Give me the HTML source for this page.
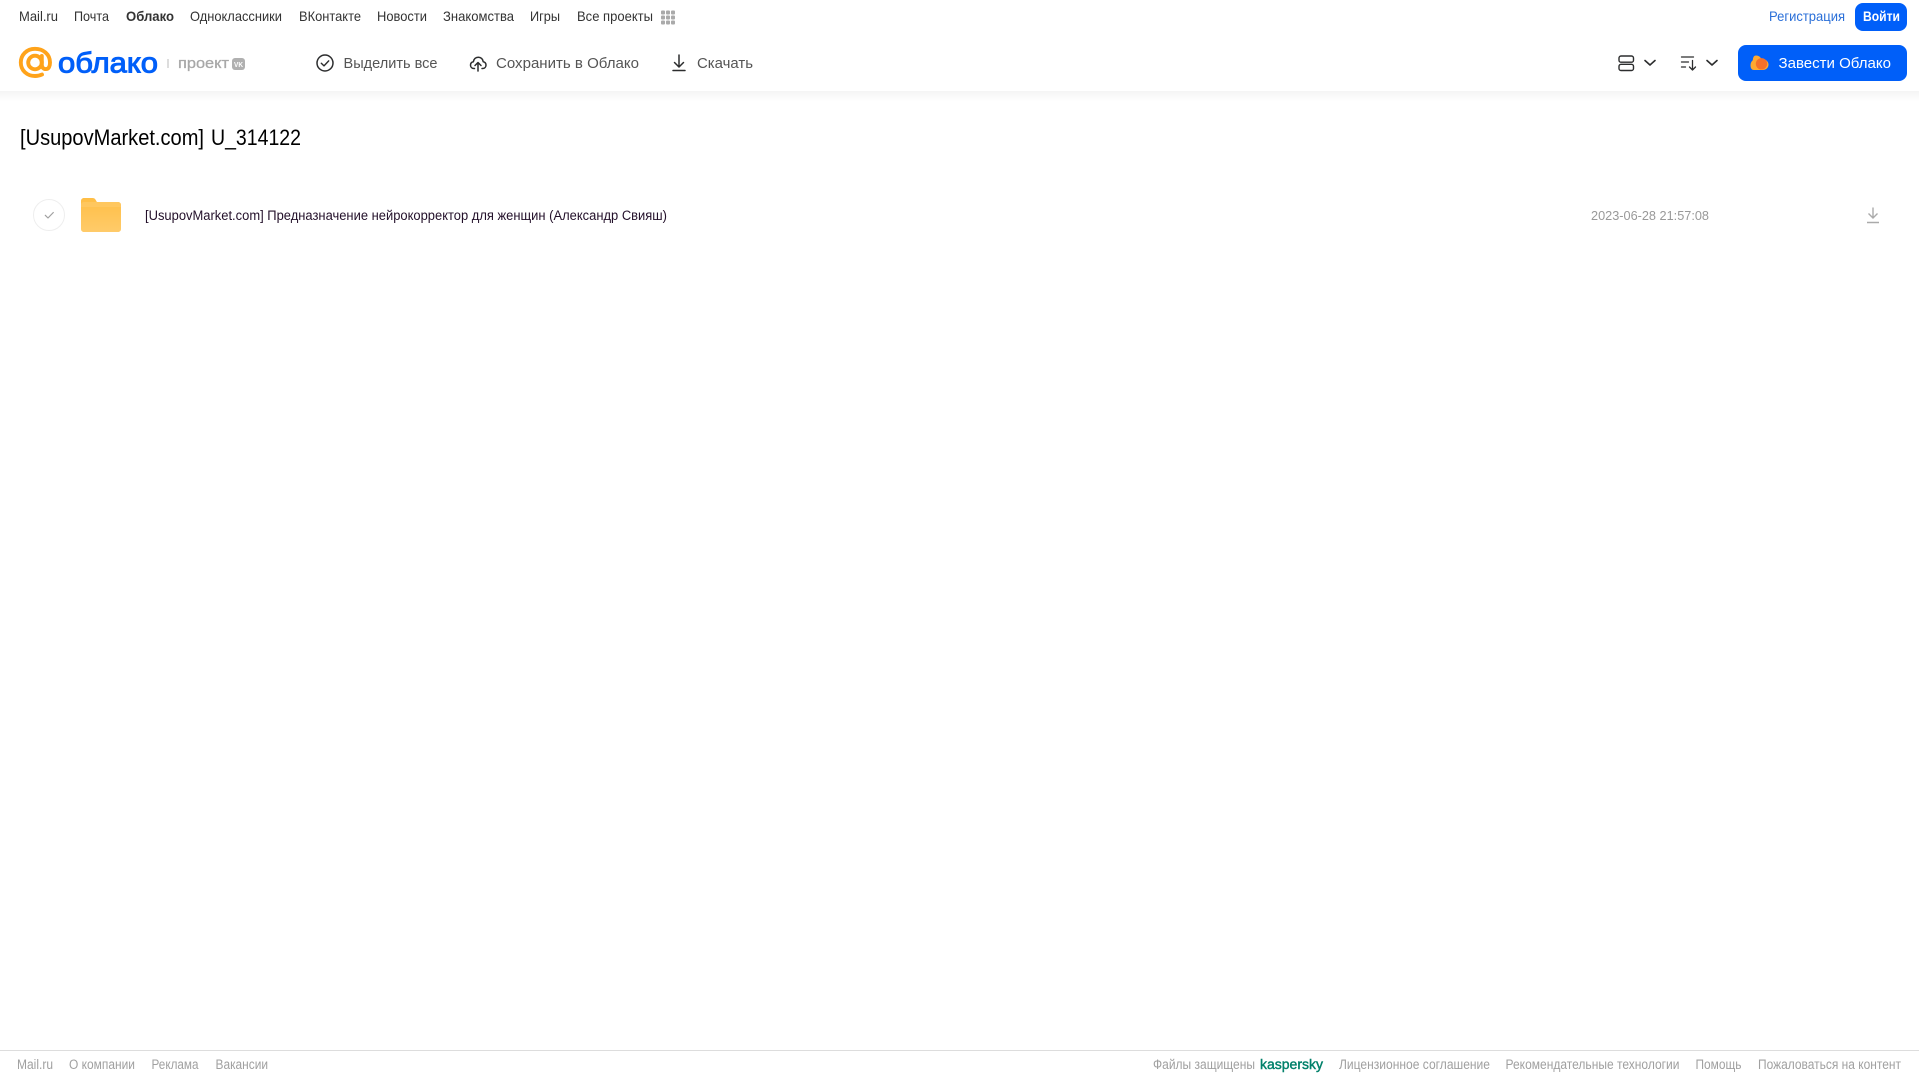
<!DOCTYPE html>
<html lang="ru"><head><meta charset="utf-8"><title>Облако</title>
<style>
html,body{margin:0;padding:0;background:#fff;width:1919px;height:1079px;overflow:hidden}
svg{display:block;position:absolute;left:0;top:0}
text{font-family:"Liberation Sans",sans-serif}
.n{font-size:14px;fill:#333}
.a{font-size:15px;fill:#555}
.f{font-size:13.5px;fill:#a0a0a0}
</style></head><body>
<svg width="1919" height="1079" viewBox="0 0 1919 1079" xmlns="http://www.w3.org/2000/svg">
<defs>
<linearGradient id="sh" x1="0" y1="0" x2="0" y2="1"><stop offset="0" stop-color="#f4f4f4"/><stop offset="1" stop-color="#fff"/></linearGradient>
<linearGradient id="fo" x1="0" y1="0" x2="0" y2="1"><stop offset="0" stop-color="#ffbe45"/><stop offset="1" stop-color="#ffcb6a"/></linearGradient>
</defs>
<rect x="0" y="91" width="1919" height="11" fill="url(#sh)"/>

<!-- top nav -->
<text class="n" x="19" y="21" textLength="39" lengthAdjust="spacingAndGlyphs">Mail.ru</text>
<text class="n" x="74" y="21" textLength="35" lengthAdjust="spacingAndGlyphs">Почта</text>
<text class="n" x="126" y="21" textLength="48" lengthAdjust="spacingAndGlyphs" font-weight="bold">Облако</text>
<text class="n" x="190" y="21" textLength="92" lengthAdjust="spacingAndGlyphs">Одноклассники</text>
<text class="n" x="299" y="21" textLength="62" lengthAdjust="spacingAndGlyphs">ВКонтакте</text>
<text class="n" x="377" y="21" textLength="50" lengthAdjust="spacingAndGlyphs">Новости</text>
<text class="n" x="443" y="21" textLength="71" lengthAdjust="spacingAndGlyphs">Знакомства</text>
<text class="n" x="530" y="21" textLength="30" lengthAdjust="spacingAndGlyphs">Игры</text>
<text class="n" x="577" y="21" textLength="76" lengthAdjust="spacingAndGlyphs">Все проекты</text>
<g fill="#aaa">
<rect x="661" y="10.500" width="4" height="4" rx="1"/><rect x="666" y="10.500" width="4" height="4" rx="1"/><rect x="671" y="10.500" width="4" height="4" rx="1"/>
<rect x="661" y="15.500" width="4" height="4" rx="1"/><rect x="666" y="15.500" width="4" height="4" rx="1"/><rect x="671" y="15.500" width="4" height="4" rx="1"/>
<rect x="661" y="20.500" width="4" height="4" rx="1"/><rect x="666" y="20.500" width="4" height="4" rx="1"/><rect x="671" y="20.500" width="4" height="4" rx="1"/>
</g>
<text x="1769" y="21" font-size="14" fill="#2a6fd8" textLength="76" lengthAdjust="spacingAndGlyphs">Регистрация</text>
<rect x="1855" y="3" width="52" height="28" rx="8" fill="#005ff9"/>
<text x="1863" y="21" font-size="14" font-weight="bold" fill="#fff" textLength="37" lengthAdjust="spacingAndGlyphs">Войти</text>

<!-- logo -->
<g fill="none" stroke="#ffa31a" stroke-width="3.900" stroke-linecap="round">
<circle cx="35" cy="62.500" r="6.800"/>
<path d="M41.800 56v8.500c0 3 1.700 4.600 4 4.600 3 0 4.200-3 4.200-6.600C50 54 43 48.800 35 48.800 26.500 48.800 20.800 55 20.800 62.500 20.800 70.500 27 76 35 76c2.600 0 4.800-.5 7-1.500"/>
</g>
<text x="58" y="72.500" font-size="29" fill="#005ff9" stroke="#005ff9" stroke-width="1" textLength="100" lengthAdjust="spacingAndGlyphs">облако</text>
<rect x="167.500" y="59" width="1" height="9" fill="#bbb"/>
<text x="178" y="68" font-size="15" fill="#a8a8a8" stroke="#a8a8a8" stroke-width=".3" textLength="51" lengthAdjust="spacingAndGlyphs">проект</text>
<rect x="232" y="58" width="13" height="12" rx="3" fill="#b0b0b0"/>
<text x="234" y="67" font-size="7.500" font-weight="bold" fill="#fff" textLength="9" lengthAdjust="spacingAndGlyphs">VK</text>

<!-- actions -->
<circle cx="325" cy="63" r="8" fill="none" stroke="#2c2d2e" stroke-width="1.500"/>
<path d="M321.300 63.200l2.700 2.700 4.700-5" fill="none" stroke="#2c2d2e" stroke-width="1.400" stroke-linecap="round" stroke-linejoin="round"/>
<text class="a" x="343.500" y="68" textLength="94" lengthAdjust="spacingAndGlyphs">Выделить все</text>
<path d="M474.500 68.500h-.5c-2.200 0-3.500-1.600-3.500-3.400 0-1.700 1.100-3.100 2.900-3.400.3-2.700 2.300-4.500 4.900-4.500 2.600 0 4.600 1.800 4.900 4.500 1.800.3 2.800 1.700 2.800 3.400 0 1.800-1.300 3.400-3.500 3.400H482" fill="none" stroke="#2c2d2e" stroke-width="1.500" stroke-linecap="round" stroke-linejoin="round"/>
<path d="M478 71v-8M475 65.500l3-3 3 3" fill="none" stroke="#2c2d2e" stroke-width="1.500" stroke-linecap="round" stroke-linejoin="round"/>
<text class="a" x="496" y="68" textLength="143" lengthAdjust="spacingAndGlyphs">Сохранить в Облако</text>
<path d="M679 55v11.500M674.500 62.500l4.500 4.500 4.500-4.500M673 70.500h12" fill="none" stroke="#2c2d2e" stroke-width="1.500" stroke-linecap="round" stroke-linejoin="round"/>
<text class="a" x="697" y="68" textLength="56" lengthAdjust="spacingAndGlyphs">Скачать</text>

<!-- view/sort -->
<g fill="none" stroke="#2c2d2e" stroke-width="1.400">
<rect x="1619" y="56" width="14.500" height="6.200" rx="2"/>
<rect x="1619" y="64.300" width="14.500" height="6.200" rx="2"/>
</g>
<path d="M1645 60.500l5 4.500 5-4.500M1707 60.500l5 4.500 5-4.500" fill="none" stroke="#2c2d2e" stroke-width="1.600" stroke-linecap="round" stroke-linejoin="round"/>
<path d="M1681.500 57h12M1681.500 62h7M1681.500 67h4M1692.500 60.500v9M1689.500 67l3 3 3-3" fill="none" stroke="#2c2d2e" stroke-width="1.300" stroke-linecap="round" stroke-linejoin="round"/>

<!-- CTA -->
<rect x="1738" y="45" width="169" height="36" rx="8" fill="#005ff9"/>
<path d="M1756 55.500c2.700 0 4.500 1.500 5.300 3.500 3.700-.3 7.200 2 7.200 5.500 0 3.400-2.600 5.500-5.800 5.500h-8.700c-2.700 0-3.500-2.200-3.500-4.700 0-2.200 1-3.900 2.300-5 .2-2.700.900-4.800 3.200-4.800z" fill="#ffa930"/>
<circle cx="1761.500" cy="63.800" r="5.700" fill="#f4712b"/>
<text x="1778.500" y="68" font-size="15" fill="#fff" textLength="112.500" lengthAdjust="spacingAndGlyphs">Завести Облако</text>

<!-- title -->
<text x="20" y="145" font-size="22" fill="#000" textLength="184" lengthAdjust="spacingAndGlyphs">[UsupovMarket.com]</text>
<text x="211" y="145" font-size="22" fill="#000" textLength="90" lengthAdjust="spacingAndGlyphs">U_314122</text>

<!-- row -->
<circle cx="49" cy="215" r="15.500" fill="#fff" stroke="#eeeeee" stroke-width="1"/>
<path d="M45.300 215.300l2.700 2.700 5.300-5.500" fill="none" stroke="#a0a0a0" stroke-width="1.200" stroke-linecap="round" stroke-linejoin="round"/>
<path d="M84 198h8.500c1.500 0 2.300.6 3 1.600l1.400 2.400H118c1.800 0 3 1.200 3 3v24c0 1.800-1.200 3-3 3H84c-1.800 0-3-1.200-3-3v-28c0-1.800 1.200-3 3-3z" fill="url(#fo)"/>
<path d="M81 207v-2c0-1.800 1.200-3 3-3h34c1.800 0 3 1.200 3 3v2z" fill="#ffcc70" opacity=".55"/>
<text x="145" y="220" font-size="13.500" fill="#23102a" textLength="522" lengthAdjust="spacingAndGlyphs">[UsupovMarket.com] Предназначение нейрокорректор для женщин (Александр Свияш)</text>
<text x="1591" y="220" font-size="13" fill="#999" textLength="118" lengthAdjust="spacingAndGlyphs">2023-06-28 21:57:08</text>
<path d="M1873 207.500v10.500M1868.500 213.500l4.500 4.500 4.500-4.500M1867 222.500h12" fill="none" stroke="#aaa" stroke-width="1.400"/>

<!-- footer -->
<rect x="0" y="1050" width="1919" height="1" fill="#ddd"/>
<text class="f" x="17" y="1069" textLength="36" lengthAdjust="spacingAndGlyphs">Mail.ru</text>
<text class="f" x="69" y="1069" textLength="66" lengthAdjust="spacingAndGlyphs">О компании</text>
<text class="f" x="151.500" y="1069" textLength="47" lengthAdjust="spacingAndGlyphs">Реклама</text>
<text class="f" x="215.500" y="1069" textLength="52.500" lengthAdjust="spacingAndGlyphs">Вакансии</text>
<text class="f" x="1153" y="1069" textLength="102" lengthAdjust="spacingAndGlyphs">Файлы защищены</text>
<text x="1260" y="1069" font-size="13.500" fill="#00806a" stroke="#00806a" stroke-width=".4" textLength="63" lengthAdjust="spacingAndGlyphs">kaspersky</text>
<text class="f" x="1339" y="1069" textLength="151" lengthAdjust="spacingAndGlyphs">Лицензионное соглашение</text>
<text class="f" x="1505.500" y="1069" textLength="174" lengthAdjust="spacingAndGlyphs">Рекомендательные технологии</text>
<text class="f" x="1695.500" y="1069" textLength="46" lengthAdjust="spacingAndGlyphs">Помощь</text>
<text class="f" x="1758" y="1069" textLength="143" lengthAdjust="spacingAndGlyphs">Пожаловаться на контент</text>
</svg>
</body></html>
